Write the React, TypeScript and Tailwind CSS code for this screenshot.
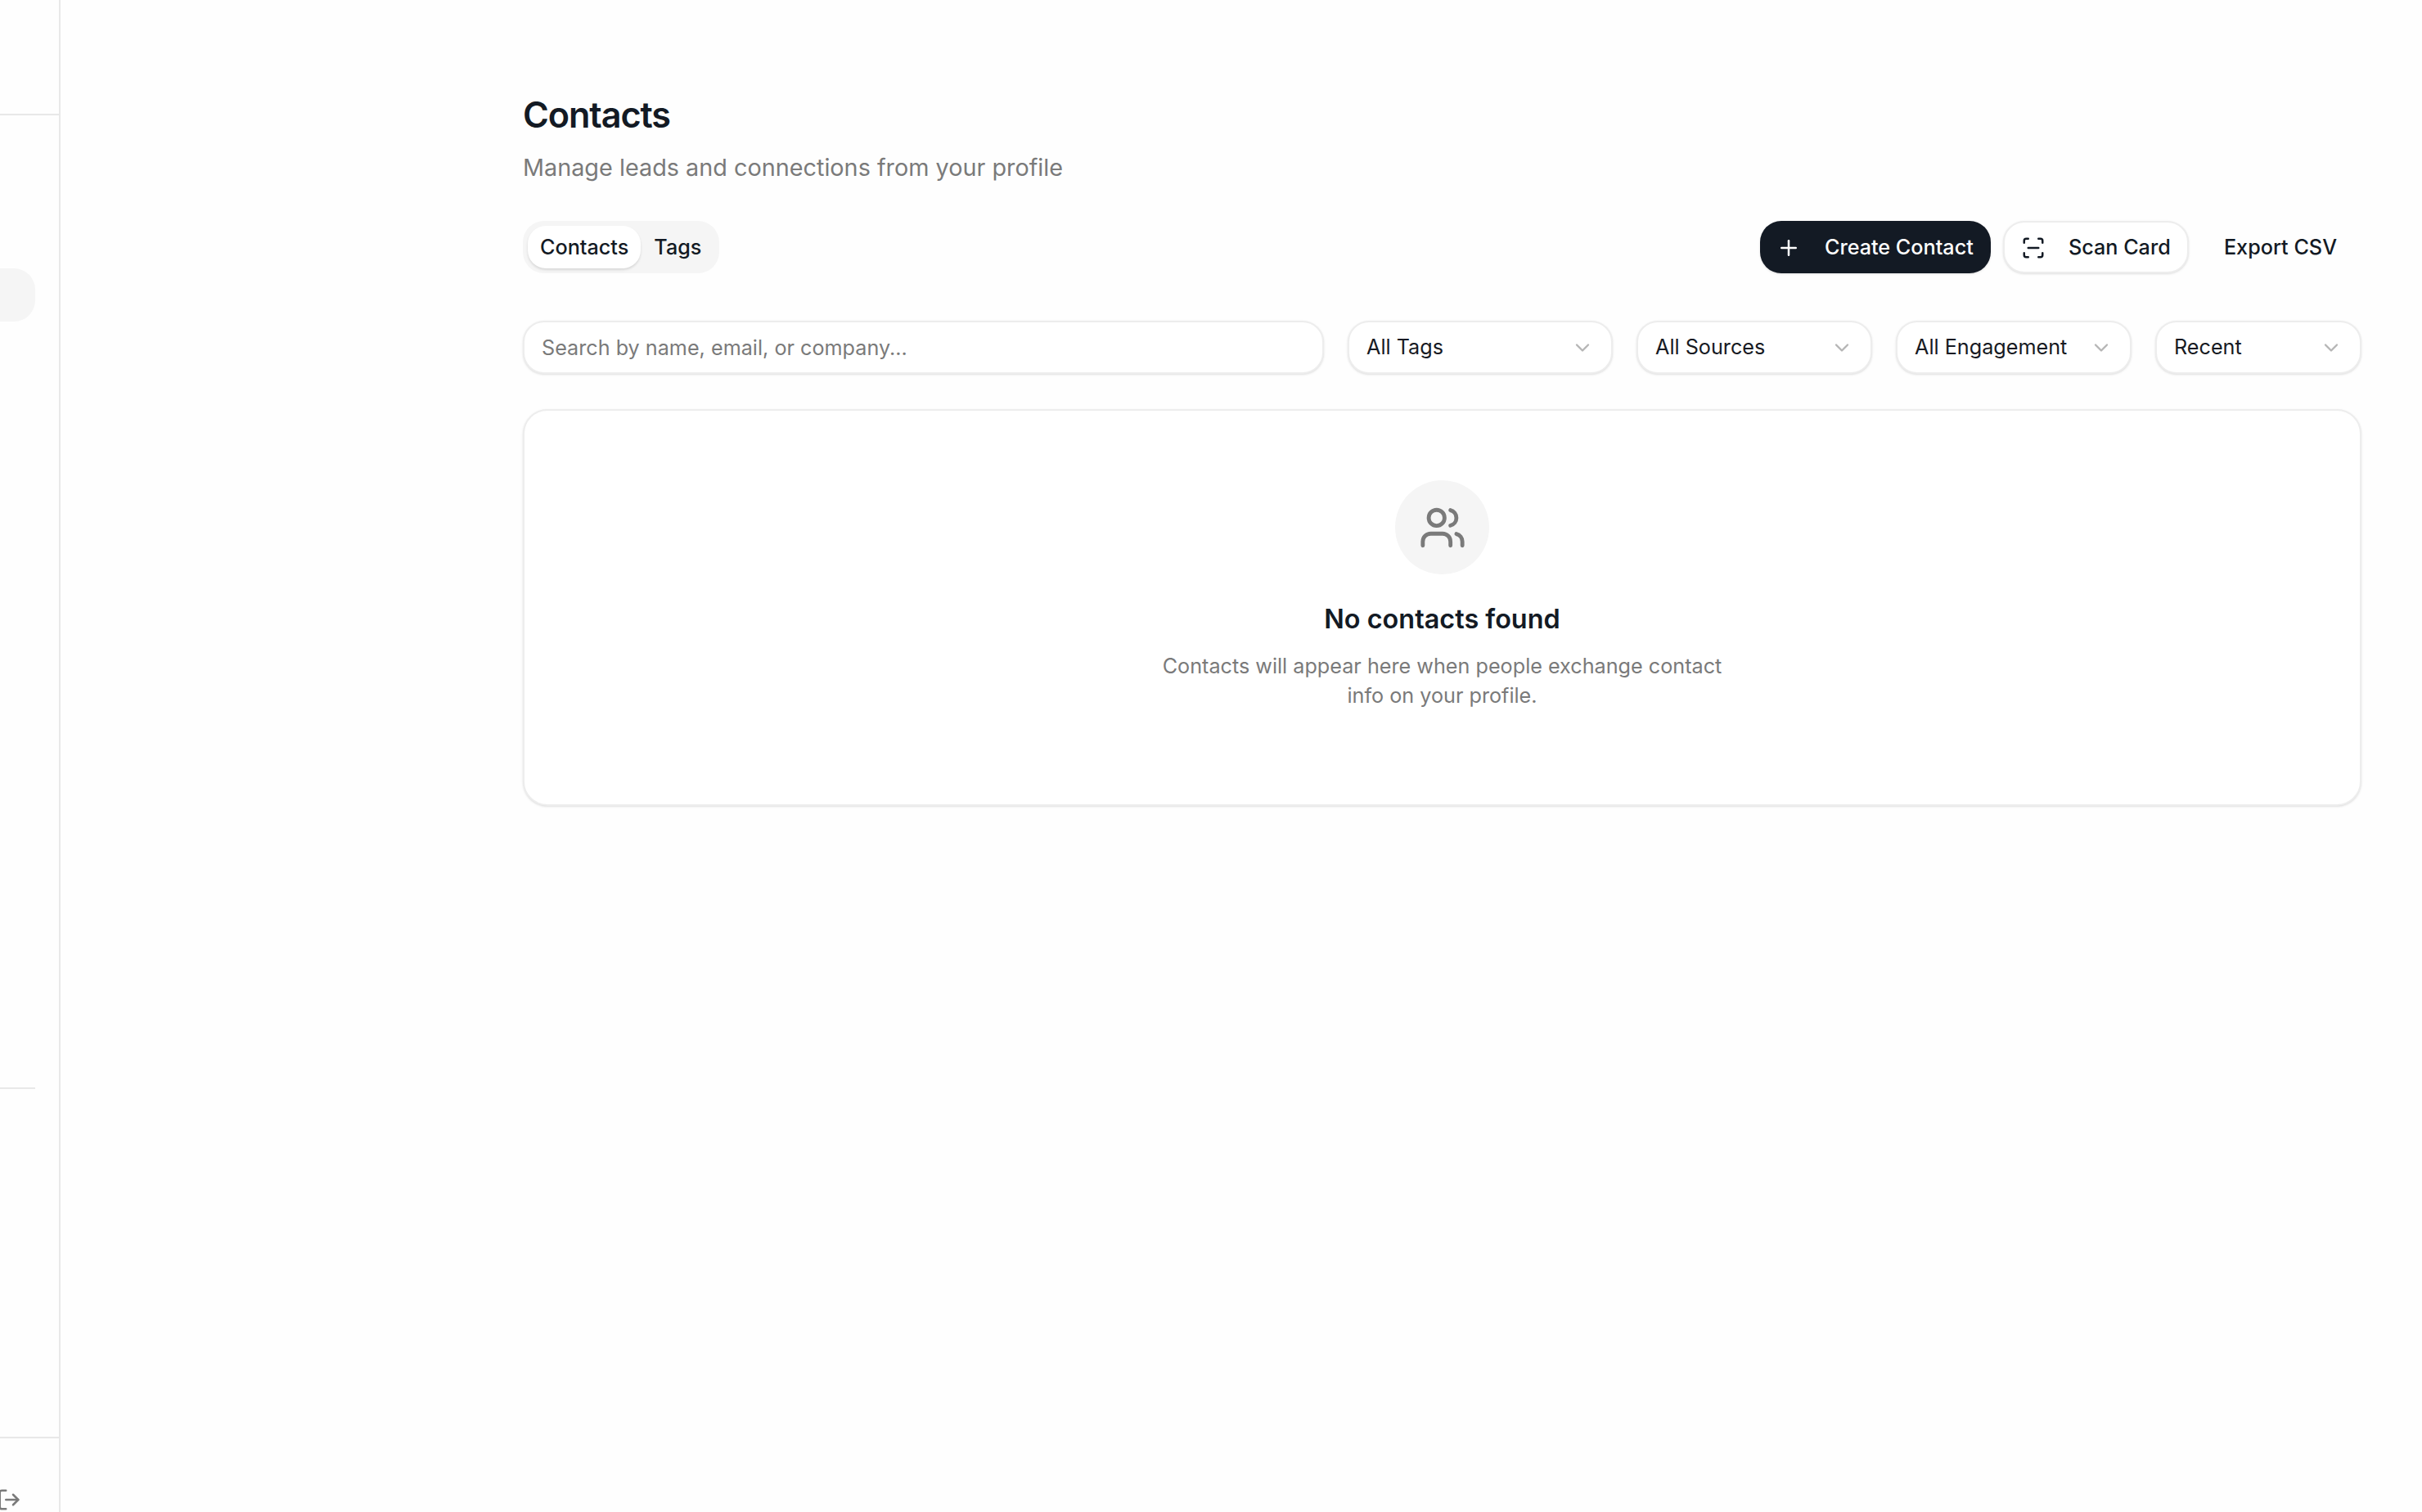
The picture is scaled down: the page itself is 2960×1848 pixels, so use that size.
import { ChevronDown, LogOut, Plus, ScanLine, Users } from "lucide-react";

function Filter({ label, width }: { label: string; width: string }) {
  return (
    <button className={`flex h-[65px] ${width} items-center justify-between rounded-[26px] border-2 border-[#ededed] bg-white pl-[21px] pr-[21px] text-[25.2px] text-[#171a23] shadow-sm`}>
      <span>{label}</span>
      <ChevronDown className="size-[28px] text-[#b5b5b5]" strokeWidth={2} />
    </button>
  );
}

export default function App() {
  return (
    <div className="flex h-[1848px] w-[2960px] overflow-hidden bg-[#fefefe] font-['Inter',sans-serif] text-[#131a24]">
      <aside className="flex h-full w-[74px] shrink-0 flex-col overflow-hidden border-r-2 border-[#e8e8e8]">
        <div className="h-[141px] shrink-0 border-b-2 border-[#e8e8e8]" />
        <nav className="flex flex-1 flex-col pr-[29px]">
          <div className="mt-[187px] h-[65px] rounded-r-[26px] bg-[#f5f5f5]" />
          <div className="mt-[936px] h-[2px] bg-[#e8e8e8]" />
        </nav>
        <div className="h-[92px] shrink-0 border-t-2 border-[#e8e8e8] pt-[60px]">
          <LogOut className="ml-[-4px] size-[30px] text-[#7a7a7a]" strokeWidth={2} />
        </div>
      </aside>

      <main className="min-w-0 flex-1 pl-[565px] pr-[74px] pt-[112px]">
        <h1 className="text-[43.2px] font-semibold leading-[56px] tracking-[-0.025em]">Contacts</h1>
        <p className="mt-[15px] text-[28.8px] leading-[44px] text-[#7a7a7a]">Manage leads and connections from your profile</p>

        <div className="mt-[43px] flex h-[64px] items-center justify-between">
          <div className="flex h-[64px] items-center rounded-[26px] bg-[#f5f5f5] p-[6px]">
            <div className="flex h-[52px] items-center rounded-[22px] bg-white px-[15px] pt-[1px] text-[25.2px] font-medium shadow-[0_2px_3px_rgba(0,0,0,0.12)]">Contacts</div>
            <div className="flex h-[52px] items-center px-[16px] pt-[1px] text-[25.2px] font-medium">Tags</div>
          </div>
          <div className="flex items-center">
            <button className="flex h-[64px] w-[282px] items-center gap-[29px] rounded-[26px] bg-[#131a24] pl-[20px] pt-[1px] text-[25.2px] font-medium text-white shadow-sm">
              <Plus className="size-[30px]" strokeWidth={2} />
              Create Contact
            </button>
            <button className="ml-[15px] flex h-[64px] w-[227px] items-center gap-[28px] rounded-[26px] border-2 border-[#ededed] bg-white pl-[20px] pt-[1px] text-[25.2px] font-medium shadow-sm">
              <ScanLine className="size-[30px]" strokeWidth={2} />
              Scan Card
            </button>
            <button className="flex h-[64px] items-center pl-[43px] pr-[30px] pt-[1px] text-[25.2px] font-medium">Export CSV</button>
          </div>
        </div>

        <div className="mt-[58px] flex h-[65px] gap-[29px]">
          <input
            placeholder="Search by name, email, or company..."
            className="h-[65px] min-w-0 flex-1 rounded-[26px] border-2 border-[#ededed] bg-white px-[21px] text-[25.2px] shadow-sm outline-none placeholder:text-[#7a7a7a]"
          />
          <Filter label="All Tags" width="w-[324px]" />
          <Filter label="All Sources" width="w-[288px]" />
          <Filter label="All Engagement" width="w-[288px]" />
          <Filter label="Recent" width="w-[252px]" />
        </div>

        <section className="mt-[43px] flex h-[485px] flex-col items-center rounded-[30px] border-2 border-[#ededed] bg-white pt-[85px] shadow-sm">
          <div className="flex size-[115px] items-center justify-center rounded-full bg-[#f5f5f5]">
            <Users className="size-[58px] text-[#7a7a7a]" strokeWidth={2} />
          </div>
          <h2 className="mt-[31px] text-[32.4px] font-semibold leading-[48px]">No contacts found</h2>
          <p className="mt-[15px] w-[720px] text-center text-[25.2px] leading-[36px] text-[#7a7a7a]">
            Contacts will appear here when people exchange contact info on your profile.
          </p>
        </section>
      </main>
    </div>
  );
}
